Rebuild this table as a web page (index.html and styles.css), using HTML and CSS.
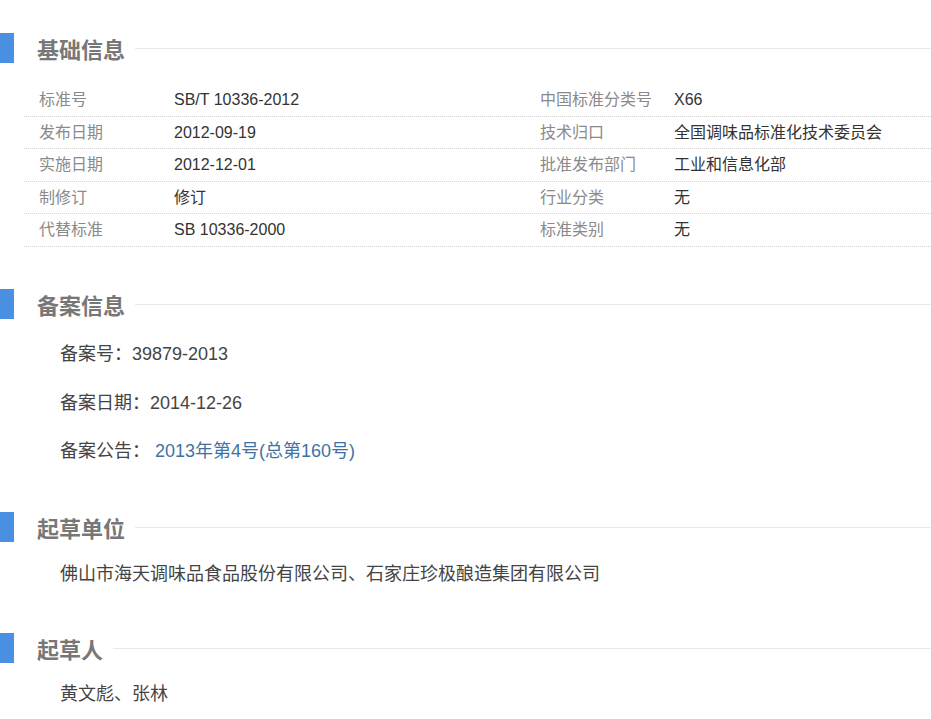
FILE: index.html
```html
<!DOCTYPE html>
<html lang="zh-CN">
<head>
<meta charset="utf-8">
<title>标准信息</title>
<link rel="stylesheet" href="styles.css">
</head>
<body>
<div class="page">
  <section class="section sec-basic">
    <div class="sec-head">
      <span class="bar"></span>
      <h2 class="title">基础信息</h2>
      <span class="rule"></span>
    </div>
    <div class="info-table">
      <div class="row">
        <div class="lbl">标准号</div><div class="val">SB/T 10336-2012</div>
        <div class="lbl">中国标准分类号</div><div class="val">X66</div>
      </div>
      <div class="row">
        <div class="lbl">发布日期</div><div class="val">2012-09-19</div>
        <div class="lbl">技术归口</div><div class="val">全国调味品标准化技术委员会</div>
      </div>
      <div class="row">
        <div class="lbl">实施日期</div><div class="val">2012-12-01</div>
        <div class="lbl">批准发布部门</div><div class="val">工业和信息化部</div>
      </div>
      <div class="row">
        <div class="lbl">制修订</div><div class="val">修订</div>
        <div class="lbl">行业分类</div><div class="val">无</div>
      </div>
      <div class="row">
        <div class="lbl">代替标准</div><div class="val">SB 10336-2000</div>
        <div class="lbl">标准类别</div><div class="val">无</div>
      </div>
    </div>
  </section>

  <section class="section sec-record">
    <div class="sec-head">
      <span class="bar"></span>
      <h2 class="title">备案信息</h2>
      <span class="rule"></span>
    </div>
    <ul class="record-list">
      <li>备案号：39879-2013</li>
      <li>备案日期：2014-12-26</li>
      <li>备案公告： <a class="link" href="#">2013年第4号(总第160号)</a></li>
    </ul>
  </section>

  <section class="section sec-unit">
    <div class="sec-head">
      <span class="bar"></span>
      <h2 class="title">起草单位</h2>
      <span class="rule"></span>
    </div>
    <p class="plain">佛山市海天调味品食品股份有限公司、石家庄珍极酿造集团有限公司</p>
  </section>

  <section class="section sec-people">
    <div class="sec-head">
      <span class="bar"></span>
      <h2 class="title">起草人</h2>
      <span class="rule"></span>
    </div>
    <p class="plain">黄文彪、张林</p>
  </section>
</div>
</body>
</html>
```

FILE: styles.css
```css
* {
  box-sizing: border-box;
}

html, body {
  margin: 0;
  padding: 0;
  background: #ffffff;
}

body {
  font-family: "Liberation Sans", "Noto Sans CJK SC", sans-serif;
  font-size: 16px;
  color: #333333;
}

.page {
  padding-top: 33px;
}

.sec-head {
  display: flex;
  align-items: center;
  height: 30px;
}

.bar {
  width: 14px;
  height: 30px;
  background: #4a90e2;
  flex: none;
}

.title {
  margin: 4px 0 0 23px;
  font-size: 22px;
  line-height: 29px;
  font-weight: bold;
  color: #777777;
  flex: none;
}

.rule {
  flex: 1;
  height: 1px;
  background: #e9e9e9;
  margin-left: 10px;
}

.info-table {
  margin: 21px 0 0 24px;
}

.row {
  display: grid;
  grid-template-columns: 135px 366px 134px 1fr;
  border-bottom: 1px dotted #d4d4d4;
  height: 32.5px;
  line-height: 31.5px;
}

.lbl {
  padding-left: 15px;
  color: #8a8a8a;
  white-space: nowrap;
}

.val {
  padding-left: 15px;
  color: #333333;
  white-space: nowrap;
}

.sec-record {
  margin-top: 42.5px;
}

.record-list {
  list-style: none;
  margin: 11px 0 0 0;
  padding: 0 0 0 60px;
  font-size: 18px;
}

.record-list li {
  line-height: 48.5px;
  color: #444444;
}

.link {
  color: #3f72a2;
  text-decoration: none;
}

.sec-unit {
  margin-top: 36.5px;
}

.plain {
  margin: 16px 0 0 0;
  padding-left: 60px;
  font-size: 18px;
  line-height: 32px;
  color: #444444;
}

.sec-people {
  margin-top: 43px;
}

.sec-people .plain {
  margin-top: 15px;
}
```
